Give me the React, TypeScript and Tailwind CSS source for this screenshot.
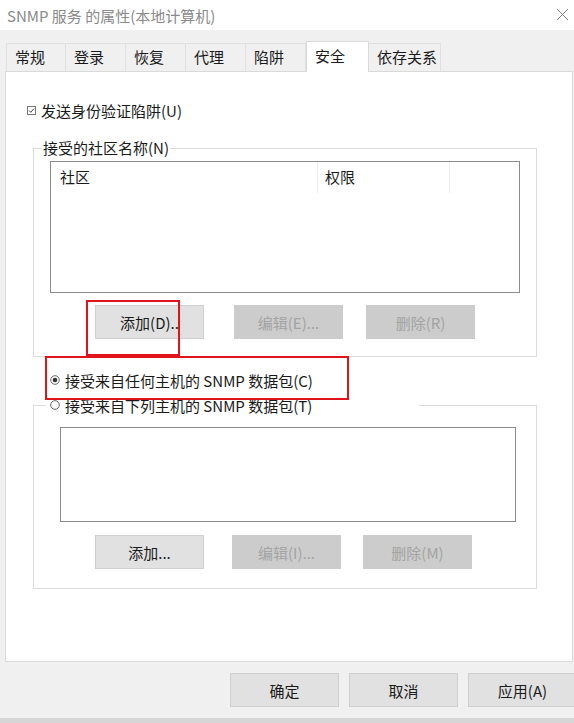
import React from 'react';

const font = { fontFamily: '"Noto Sans CJK SC", "Noto Sans", sans-serif' };

const tabs = ['常规', '登录', '恢复', '代理', '陷阱', '安全', '依存关系'];

function Btn({ label, disabled, className = '' }: { label: string; disabled?: boolean; className?: string }) {
  return (
    <div
      className={`flex h-[34px] w-[109px] shrink-0 items-center justify-center text-[15px] leading-none ${
        disabled
          ? 'bg-[#cccccc] text-[#a3a3a3]'
          : 'border border-[#cfcfcf] bg-[#e1e1e1] text-[#1a1a1a]'
      } ${className}`}
    >
      {label}
    </div>
  );
}

function Radio({ on }: { on?: boolean }) {
  return (
    <svg width="10" height="10" viewBox="0 0 10 10" className="shrink-0">
      <circle cx="5" cy="5" r="4.3" fill="white" stroke="#555" strokeWidth="0.9" />
      {on && <circle cx="5" cy="5" r="2.3" fill="#333" />}
    </svg>
  );
}

export default function App() {
  return (
    <div className="relative h-[723px] w-[574px] overflow-hidden bg-[#f0f0f0] text-[#1a1a1a]" style={font}>
      {/* title bar */}
      <div className="flex h-[30px] items-center justify-between bg-white pl-[7px] pr-[5px]">
        <span className="text-[15px] leading-none text-[#8a8a8a]">SNMP 服务 的属性(本地计算机)</span>
        <svg width="13" height="13" viewBox="0 0 13 13" className="mb-[2px]">
          <path d="M1 1L12 12M12 1L1 12" stroke="#777" strokeWidth="0.9" />
        </svg>
      </div>

      {/* tabs */}
      <div className="mt-[11px] flex items-end pl-[6px]">
        {tabs.map((t, i) =>
          t === '安全' ? (
            <div
              key={t}
              className="relative z-10 -mb-px h-[31px] w-[63px] border-x border-t border-[#d9d9d9] bg-white pl-[8px] pt-[4px] text-[15px] leading-[20px]"
            >
              {t}
            </div>
          ) : (
            <div
              key={t}
              className={`h-[28px] border-t border-r border-[#e0e0e0] bg-[#f0f0f0] pl-[8px] pt-[3px] text-[15px] leading-[20px] ${
                i === 0 ? 'border-l' : ''
              } ${t === '依存关系' ? 'w-[72px]' : 'w-[60px]'}`}
            >
              {t}
            </div>
          )
        )}
      </div>

      {/* panel */}
      <div className="ml-[5px] h-[591px] w-[568px] border border-[#d9d9d9] bg-white text-[15px]">
        <div className="mt-[28px] flex h-[20px] items-center gap-[5px] pl-[21px]">
          <svg width="9" height="9" viewBox="0 0 9 9" className="shrink-0">
            <rect x="0.5" y="0.5" width="8" height="8" fill="white" stroke="#777" />
            <path d="M2 4.5L3.8 6.3L7 2.5" fill="none" stroke="#333" strokeWidth="0.9" />
          </svg>
          <span className="leading-none">发送身份验证陷阱(U)</span>
        </div>

        {/* group 1 */}
        <div className="relative ml-[27px] mt-[28px] h-[209px] w-[504px] border border-[#dcdcdc] pl-[16px] pt-[12px]">
          <span className="absolute -top-[11px] left-[8px] bg-white px-[1px] leading-[20px]">接受的社区名称(N)</span>
          <div className="h-[132px] w-[470px] border border-[#8c8c8c]">
            <div className="flex h-[31px] items-center">
              <div className="h-full w-[266px] pl-[9px] pt-[6px] leading-[18px]">社区</div>
              <div className="h-full w-[132px] border-l border-[#ececec] pl-[7px] pt-[6px] leading-[18px]">权限</div>
              <div className="h-full border-l border-[#ececec]" />
            </div>
          </div>
          <div className="mt-[12px] flex">
            <Btn label="添加(D).." className="ml-[45px]" />
            <Btn label="编辑(E)..." disabled className="ml-[30px]" />
            <Btn label="删除(R)" disabled className="ml-[23px]" />
          </div>
        </div>

        <div className="mt-[13px] flex h-[20px] items-center gap-[5px] pl-[44px]">
          <Radio on />
          <span className="leading-none">接受来自任何主机的 SNMP 数据包(C)</span>
        </div>

        {/* group 2 */}
        <div className="relative ml-[27px] mt-[15px] h-[184px] w-[504px] border border-[#dcdcdc] pl-[26px] pt-[21px]">
          <div className="absolute -top-[11px] left-[12px] flex h-[20px] w-[373px] items-center gap-[5px] bg-white pl-[4px]">
            <Radio />
            <span className="leading-none">接受来自下列主机的 SNMP 数据包(T)</span>
          </div>
          <div className="h-[95px] w-[456px] border border-[#8c8c8c]" />
          <div className="mt-[13px] flex">
            <Btn label="添加..." className="ml-[35px]" />
            <Btn label="编辑(I)..." disabled className="ml-[28px]" />
            <Btn label="删除(M)" disabled className="ml-[22px]" />
          </div>
        </div>
      </div>

      {/* footer buttons */}
      <div className="mt-[11px] flex pl-[230px]">
        <Btn label="确定" />
        <Btn label="取消" className="ml-[10px]" />
        <Btn label="应用(A)" className="ml-[10px]" />
      </div>
      <div className="mt-[11px] h-[5px] bg-[#d6d6d6]" />

      {/* red annotation boxes */}
      <div className="pointer-events-none absolute left-[86px] top-[300px] h-[56px] w-[94px] border-2 border-[#e0141b]" />
      <div className="pointer-events-none absolute left-[45px] top-[356px] h-[44px] w-[304px] border-2 border-[#e0141b]" />
    </div>
  );
}
